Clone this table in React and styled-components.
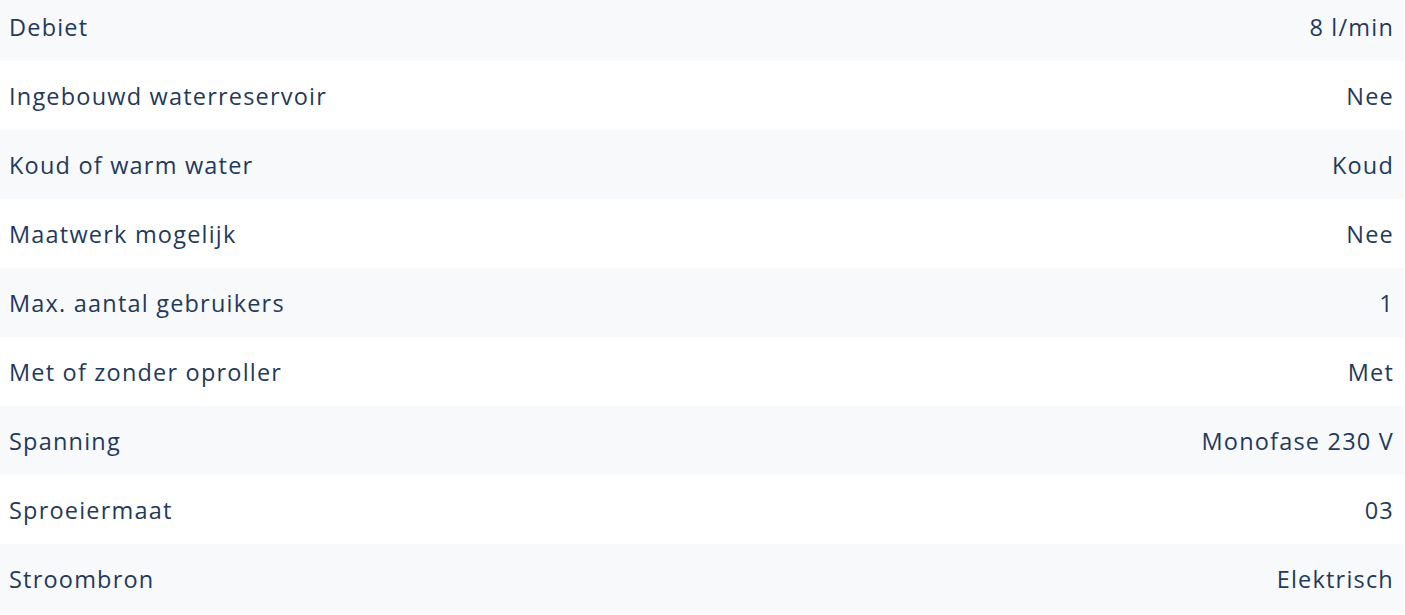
import React from "react";
import styled, { createGlobalStyle } from "styled-components";

const GlobalStyle = createGlobalStyle`
  html, body { margin: 0; padding: 0; background: #ffffff; }
  body { font-family: "Open Sans", "DejaVu Sans", sans-serif; overflow: hidden; }
`;

const SpecList = styled.dl`
  margin: -8px 0 0 0;
  width: 1404px;
  display: flex;
  flex-direction: column;
`;

const SpecRow = styled.div`
  display: flex;
  align-items: center;
  justify-content: space-between;
  height: 69px;
  padding: 0 10px 0 9px;
  box-sizing: border-box;
  background: ${(p) => (p.$striped ? "#f7f9fb" : "#ffffff")};
`;

const Label = styled.dt`
  margin: 0;
  font-size: 23.5px;
  line-height: 1;
  padding-top: 3px;
  font-weight: 400;
  color: #1f3a5c;
  letter-spacing: 1.2px;
`;

const Value = styled(Label).attrs({ as: "dd" })`
  text-align: right;
`;

const specs = [
  ["Debiet", "8 l/min"],
  ["Ingebouwd waterreservoir", "Nee"],
  ["Koud of warm water", "Koud"],
  ["Maatwerk mogelijk", "Nee"],
  ["Max. aantal gebruikers", "1"],
  ["Met of zonder oproller", "Met"],
  ["Spanning", "Monofase 230 V"],
  ["Sproeiermaat", "03"],
  ["Stroombron", "Elektrisch"],
];

export default function App() {
  return (
    <>
      <GlobalStyle />
      <SpecList>
        {specs.map(([label, value], i) => (
          <SpecRow key={label} $striped={i % 2 === 0}>
            <Label>{label}</Label>
            <Value>{value}</Value>
          </SpecRow>
        ))}
      </SpecList>
    </>
  );
}
